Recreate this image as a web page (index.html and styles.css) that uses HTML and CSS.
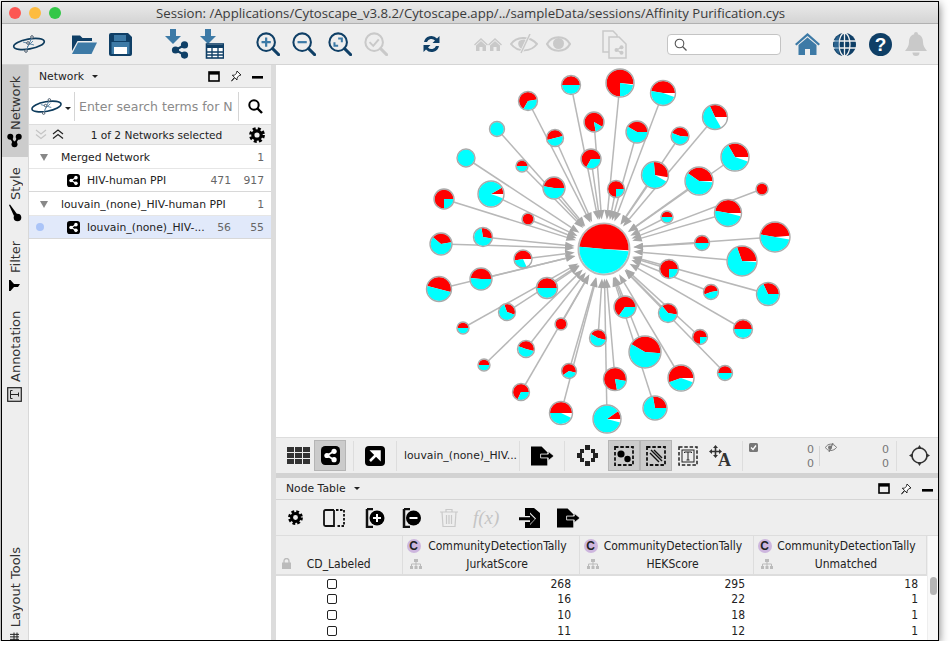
FILE: index.html
```html
<!DOCTYPE html>
<html lang="en">
<head>
  <meta charset="UTF-8">
  <title>Cytoscape</title>
  <link rel="stylesheet" href="styles.css">
</head>
<body>

  <!-- shared icons -->
  <svg class="defs" width="0" height="0">
    <symbol id="i-share" viewBox="0 0 16 16">
      <path d="M12 3.5 4 8l8 4.5" fill="none" stroke="currentColor" stroke-width="2"/>
      <circle cx="4" cy="8" r="3.2" fill="currentColor"/>
      <circle cx="12" cy="3.5" r="3.2" fill="currentColor"/>
      <circle cx="12" cy="12.5" r="3.2" fill="currentColor"/>
    </symbol>
    <symbol id="i-netbox" viewBox="0 0 16 16">
      <rect width="16" height="16" rx="3.5" fill="#000"/>
      <path d="M11 4.5 5 8l6 3.5" fill="none" stroke="#fff" stroke-width="1.5"/>
      <circle cx="5" cy="8" r="2.2" fill="#fff"/>
      <circle cx="11" cy="4.5" r="2.2" fill="#fff"/>
      <circle cx="11" cy="11.5" r="2.2" fill="#fff"/>
    </symbol>
    <symbol id="i-gear" viewBox="0 0 16 16">
      <circle cx="8" cy="8" r="4.2" fill="none" stroke="#000" stroke-width="3.2"/>
      <circle cx="8" cy="8" r="6.4" fill="none" stroke="#000" stroke-width="3" stroke-dasharray="2.9 2.13"/>
    </symbol>
    <symbol id="i-max" viewBox="0 0 12 11">
      <rect x="1" y="1" width="10" height="9" fill="none" stroke="#000" stroke-width="1.6"/>
      <rect x="1" y="1" width="10" height="2.6"/>
    </symbol>
    <symbol id="i-pin" viewBox="0 0 12 12">
      <path d="M7 1l4 4-2 .5-2 2.5V10L4.8 7.8 1.5 11l3-3.6L2.3 5.2H4.500L6.500 3.200z" fill="#fff" stroke="#000" stroke-width=".8" stroke-linejoin="round"/>
    </symbol>
    <symbol id="i-min" viewBox="0 0 12 12">
      <rect x="0" y="6" width="11" height="2.6"/>
    </symbol>
    <symbol id="i-export" viewBox="0 0 24 20">
      <path d="M0 0h11l6 6v14H0z"/>
      <path d="M10 8h8V5l6 5-6 5v-3h-8z" fill="#000" stroke="#eee" stroke-width=".9"/>
    </symbol>
    <symbol id="i-tree" viewBox="0 0 12 12">
      <rect x="4" y="1" width="4" height="3"/>
      <rect x="0" y="8" width="3" height="3"/>
      <rect x="4.500" y="8" width="3" height="3"/>
      <rect x="9" y="8" width="3" height="3"/>
      <path d="M6 4v4M1.500 8V6h9v2" fill="none" stroke="currentColor"/>
    </symbol>
    <symbol id="i-logo" viewBox="0 0 34 20">
      <ellipse cx="17" cy="10" rx="15.500" ry="5" transform="rotate(-10 17 10)" fill="none" stroke="#0d3b5c" stroke-width="1.700"/>
      <path d="M14 17 20 3M11 8l11 3M15 13l6-6" stroke="#5b87a8" stroke-width="1" fill="none"/>
      <circle cx="20" cy="3" r="1.300" fill="#fff" stroke="#456"/>
      <circle cx="14" cy="17" r="1.300" fill="#fff" stroke="#456"/>
      <circle cx="16" cy="9" r="1.300" fill="#fff" stroke="#456"/>
    </symbol>
    <symbol id="i-zoom" viewBox="0 0 26 26">
      <circle cx="11" cy="11" r="9.500" fill="none" stroke="currentColor" stroke-width="2.200"/>
      <path d="M18 18l6.500 6.500" stroke="currentColor" stroke-width="3.200" stroke-linecap="round"/>
    </symbol>
    <symbol id="i-house" viewBox="0 0 14 13">
      <path d="M7 0 14 6.500 13 7.500 7 2 1 7.500 0 6.500z"/>
      <path d="M7 3 12 7.500V13H8.500V9h-3v4H2V7.500z"/>
    </symbol>
  </svg>

  <div class="window">

    <header class="titlebar">
      <span class="light light-red"></span>
      <span class="light light-yellow"></span>
      <span class="light light-green"></span>
      <div class="title">Session: /Applications/Cytoscape_v3.8.2/Cytoscape.app/../sampleData/sessions/Affinity Purification.cys</div>
    </header>

    <div class="toolbar">
      <svg class="logo" width="34" height="20"><use href="#i-logo"/></svg>

      <div class="tool-group group-file">
        <svg width="26" height="22" viewBox="0 0 26 22">
          <path d="M1 2.500h8l2.500 2.500H21v3H6.500L1 18z" fill="#0f3f66"/>
          <path d="M7 9.500h19L20.500 21H1z" fill="#3d7aa6"/>
        </svg>
        <svg width="23" height="23" viewBox="0 0 23 23">
          <path d="M2 0h17l4 4v17a2 2 0 0 1-2 2H2a2 2 0 0 1-2-2V2a2 2 0 0 1 2-2z" fill="#0f3f66"/>
          <path d="M2.500 9h18v12h-18z" fill="#3d7aa6"/>
          <rect x="5" y="2" width="12" height="6" fill="#3d7aa6"/>
          <rect x="5" y="14" width="13" height="7" fill="#fff"/>
        </svg>
      </div>

      <div class="tool-group group-import">
        <svg width="24" height="30" viewBox="0 0 24 30">
          <path d="M5 0h6v7h5l-8 8-8-8h5z" fill="#3d7aa6"/>
          <g color="#0f3f66"><use href="#i-share" x="6" y="12" width="18" height="18"/></g>
        </svg>
        <svg width="24" height="30" viewBox="0 0 24 30">
          <path d="M5 0h6v7h5l-8 8-8-8h5z" fill="#3d7aa6"/>
          <rect x="6.500" y="15" width="17" height="14" fill="#fff" stroke="#0f3f66" stroke-width="1.600"/>
          <path d="M6.500 16h17v3h-17z" fill="#0f3f66"/>
          <path d="M12 19v10M18 19v10M7 23h16M7 26h16" stroke="#0f3f66" stroke-width="1.300"/>
        </svg>
      </div>

      <div class="tool-group group-zoom">
        <svg class="blue-icon" width="24" height="24" viewBox="0 0 26 26">
          <use href="#i-zoom"/>
          <path d="M11 6v10M6 11h10" stroke="#3d7aa6" stroke-width="2.400"/>
        </svg>
        <svg class="blue-icon" width="24" height="24" viewBox="0 0 26 26">
          <use href="#i-zoom"/>
          <path d="M6 11h10" stroke="#3d7aa6" stroke-width="2.400"/>
        </svg>
        <svg class="blue-icon" width="24" height="24" viewBox="0 0 26 26">
          <use href="#i-zoom"/>
          <path d="M11 7h4v4M11 15H7v-4" fill="none" stroke="#3d7aa6" stroke-width="2.200"/>
        </svg>
        <svg class="off-icon" width="24" height="24" viewBox="0 0 26 26">
          <use href="#i-zoom"/>
          <path d="M6 11l4 4 6-7" fill="none" stroke="currentColor" stroke-width="2.200"/>
        </svg>
      </div>

      <svg class="refresh" width="19" height="20" viewBox="0 0 19 20">
        <path d="M2 8a7.500 7.500 0 0 1 13-3.500L17.500 2v7h-7l2.500-2.500A4.800 4.800 0 0 0 5 8z" fill="#0f3f66"/>
        <path d="M17 12a7.500 7.500 0 0 1-13 3.500L1.500 18v-7h7L6 13.500A4.800 4.800 0 0 0 14 12z" fill="#0f3f66"/>
      </svg>

      <div class="tool-group group-hide">
        <svg width="28" height="13" viewBox="0 0 28 13" fill="#c9c9c9">
          <use href="#i-house" x="0" width="14" height="13"/>
          <use href="#i-house" x="14" width="14" height="13"/>
        </svg>
        <svg width="28" height="20" viewBox="0 0 28 20">
          <path d="M1 10c5-7 18-9 26 0-6 8-19 9-26 0z" fill="none" stroke="#c9c9c9" stroke-width="2"/>
          <path d="M9 7c3-2 6-2 8 0l-5 8c-3-1-5-5-3-8z" fill="#c9c9c9"/>
          <path d="M20 0 11 19" stroke="#eee" stroke-width="3"/>
          <path d="M20 0 11 19" stroke="#c9c9c9" stroke-width="1.500"/>
        </svg>
        <svg width="25" height="18" viewBox="0 0 25 18">
          <path d="M1 9c5-9 18-9 23 0-5 9-18 9-23 0z" fill="none" stroke="#c9c9c9" stroke-width="2.200"/>
          <circle cx="12.500" cy="8.500" r="5.500" fill="#c9c9c9"/>
        </svg>
      </div>

      <svg class="doc-icon" width="25" height="29" viewBox="0 0 25 29" fill="#eee" stroke="#c9c9c9" stroke-width="1.500">
        <path d="M1 1h10l4 4v17H1z"/>
        <path d="M7 7h10l7 7v14H7z"/>
        <g color="#c9c9c9"><use href="#i-share" x="12" y="15" width="10" height="10" stroke="none"/></g>
      </svg>

      <div class="search-box">
        <svg width="13" height="13" viewBox="0 0 13 13">
          <circle cx="5.500" cy="5.500" r="4.300" fill="none" stroke="#555" stroke-width="1.100"/>
          <path d="M8.500 8.500l4 4" stroke="#555" stroke-width="1.200"/>
        </svg>
      </div>

      <div class="tool-group group-help">
        <svg width="25" height="22" viewBox="0 0 25 22">
          <path d="M12.500 0 25 11l-1.500 1.500L12.500 3 1.500 12.500 0 11z" fill="#3d7aa6"/>
          <path d="M12.500 4.500 21.500 12v10h-6.500v-6h-5v6H3.500V12z" fill="#3d7aa6"/>
        </svg>
        <svg width="23" height="23" viewBox="0 0 23 23">
          <circle cx="11.500" cy="11.500" r="11.500" fill="#0f3f66"/>
          <path d="M0 8h23M0 15h23M11.500 0v23" stroke="#eee" stroke-width="1.300"/>
          <ellipse cx="11.500" cy="11.500" rx="5.500" ry="11.500" fill="none" stroke="#eee" stroke-width="1.300"/>
          <path d="M6 2a11.500 11.500 0 0 0 0 19z" fill="#3d7aa6" opacity=".6"/>
        </svg>
        <div class="help-badge">?</div>
        <svg width="22" height="24" viewBox="0 0 22 24" fill="#c9c9c9">
          <circle cx="11" cy="2" r="2"/>
          <path d="M11 2c5 0 7 4 7 8 0 4 2 6 4 9H0c2-3 4-5 4-9 0-4 2-8 7-8z"/>
          <path d="M7.500 20.500h7a3.500 3.500 0 0 1-7 0z"/>
        </svg>
      </div>
    </div>

    <div class="main">

      <nav class="tabs">
        <div class="tab tab-network">
          <svg width="15" height="15" class="tab-icon turn"><use href="#i-share" color="#000"/></svg>
          <span>Network</span>
        </div>
        <div class="tab tab-style">
          <svg width="14" height="18" viewBox="0 0 14 18" class="tab-icon flip">
            <path d="M1 1 2 .5 9 10l-3 2z"/>
            <circle cx="9.500" cy="13.500" r="3.800"/>
          </svg>
          <span>Style</span>
        </div>
        <div class="tab tab-filter">
          <svg width="11" height="11" viewBox="0 0 11 11" class="tab-icon">
            <path d="M0 0h11v1.500L7 5v6L4 9V5L0 1.500z" transform="rotate(90 5.500 5.500)"/>
          </svg>
          <span>Filter</span>
        </div>
        <div class="tab tab-annotation">
          <svg width="15" height="15" viewBox="0 0 15 15" class="tab-icon turn">
            <rect x=".7" y=".7" width="13.600" height="13.600" fill="#ddd" stroke="#222" stroke-width="1.200"/>
            <path d="M3.500 5.500V3.500h8v2M7.500 3.500v8M5.500 11.500h4" fill="none" stroke="#222"/>
          </svg>
          <span>Annotation</span>
        </div>
        <div class="tab tab-layout">
          <svg width="9" height="8" viewBox="0 0 9 8" class="tab-icon">
            <path d="M0 1h9M0 3.500h9M0 6h9M2 0v8M5 0v8" stroke="#222"/>
          </svg>
          <span>Layout Tools</span>
        </div>
      </nav>

      <section class="net-panel">
        <div class="panel-head net-head">
          <span class="panel-name">Network</span><span class="caret"></span>
          <div class="win-btns">
            <svg width="12" height="11"><use href="#i-max"/></svg>
            <svg width="12" height="12"><use href="#i-pin"/></svg>
            <svg width="12" height="12"><use href="#i-min"/></svg>
          </div>
        </div>

        <div class="net-search">
          <svg class="search-logo" width="33" height="19"><use href="#i-logo"/></svg>
          <span class="caret"></span>
          <div class="net-search-text">Enter search terms for N</div>
          <svg class="search-go" width="15" height="15" viewBox="0 0 15 15">
            <circle cx="6" cy="6" r="4.700" fill="none" stroke="#000" stroke-width="2"/>
            <path d="M9.500 9.500l4.500 4.500" stroke="#000" stroke-width="2.400"/>
          </svg>
        </div>

        <div class="net-nav">
          <svg width="12" height="11" viewBox="0 0 12 11" fill="none" stroke="#c4c4c4" stroke-width="1.200">
            <path d="M1 1l5 4 5-4M1 5.500l5 4 5-4"/>
          </svg>
          <svg width="12" height="11" viewBox="0 0 12 11" fill="none" stroke="#222" stroke-width="1.200">
            <path d="M1 5l5-4 5 4M1 9.500l5-4 5 4"/>
          </svg>
          <div class="net-count">1 of 2 Networks selected</div>
          <svg width="16" height="16"><use href="#i-gear"/></svg>
        </div>

        <div class="net-row">
          <span class="tri"></span><span class="net-name">Merged Network</span><span class="num">1</span>
        </div>
        <div class="net-row net-child">
          <svg width="13" height="13"><use href="#i-netbox"/></svg>
          <span class="net-name">HIV-human PPI</span><span class="num">471</span><span class="num num-wide">917</span>
        </div>
        <div class="net-row">
          <span class="tri"></span><span class="net-name">louvain_(none)_HIV-human PPI</span><span class="num">1</span>
        </div>
        <div class="net-row net-child net-selected">
          <span class="dot"></span>
          <svg width="13" height="13"><use href="#i-netbox"/></svg>
          <span class="net-name">louvain_(none)_HIV-...</span><span class="num">56</span><span class="num num-wide">55</span>
        </div>
      </section>

      <div class="divider"></div>

      <section class="right">
        <svg id="graph" class="graph" viewBox="276 65 662 372"></svg>

        <div class="graph-bar">
          <svg class="gb-grid" width="23" height="17" viewBox="0 0 23 17" fill="#333">
            <rect width="7" height="5"/><rect x="8" width="7" height="5"/><rect x="16" width="7" height="5"/>
            <rect y="6" width="7" height="5"/><rect x="8" y="6" width="7" height="5"/><rect x="16" y="6" width="7" height="5"/>
            <rect y="12" width="7" height="5"/><rect x="8" y="12" width="7" height="5"/><rect x="16" y="12" width="7" height="5"/>
          </svg>
          <div class="gb-on gb-share"><svg width="19" height="19"><use href="#i-netbox"/></svg></div>
          <i class="gb-sep"></i>
          <svg class="gb-arrow" width="20" height="20" viewBox="0 0 20 20">
            <rect width="20" height="20" rx="4"/>
            <path d="M5 15 12 8M7.500 5.500h7v7z" stroke="#fff" stroke-width="2.500" fill="#fff"/>
          </svg>
          <i class="gb-sep"></i>
          <span class="gb-name">louvain_(none)_HIV...</span>
          <i class="gb-sep"></i>
          <svg class="gb-export" width="23" height="20"><use href="#i-export"/></svg>
          <i class="gb-sep"></i>
          <svg class="gb-diamond" width="21" height="21" viewBox="0 0 21 21" fill="#222">
            <rect x="8" y="0" width="5" height="5"/><rect x="3" y="4" width="4" height="4"/><rect x="14" y="4" width="4" height="4"/>
            <rect x="0" y="8" width="5" height="5"/><rect x="16" y="8" width="5" height="5"/>
            <rect x="3" y="13" width="4" height="4"/><rect x="14" y="13" width="4" height="4"/><rect x="8" y="16" width="5" height="5"/>
          </svg>
          <div class="gb-on gb-sel1">
            <svg width="20" height="20" viewBox="0 0 20 20">
              <rect x="1" y="1" width="18" height="18" fill="none" stroke="#111" stroke-width="1.800" stroke-dasharray="3.500 1.800"/>
              <circle cx="7" cy="8" r="3.600"/><circle cx="13.500" cy="13" r="3.200"/>
            </svg>
          </div>
          <div class="gb-on gb-sel2">
            <svg width="20" height="20" viewBox="0 0 20 20">
              <rect x="1" y="1" width="18" height="18" fill="none" stroke="#111" stroke-width="1.800" stroke-dasharray="3.500 1.800"/>
              <path d="M4 7l9 9M5 4l11 11M8 4l8 8" stroke="#111" stroke-width="1.400"/>
            </svg>
          </div>
          <svg class="gb-text" width="20" height="20" viewBox="0 0 20 20">
            <rect x="1" y="1" width="18" height="18" fill="none" stroke="#222" stroke-width="1.500" stroke-dasharray="3.500 1.800"/>
            <rect x="4" y="4" width="12" height="12" fill="none" stroke="#222"/>
            <path d="M6.500 7V6h7v1M10 6v8M8.500 14h3" fill="none" stroke="#222"/>
          </svg>
          <div class="gb-move">
            <svg class="gb-move-arrows" width="13" height="13" viewBox="0 0 13 13" fill="#333">
              <path d="M6.500 0 9 3H7.300v2.700H10V4l3 2.500L10 9V7.300H7.300V10H9l-2.500 3L4 10h1.700V7.300H3V9L0 6.500 3 4v1.700h2.700V3H4z"/>
            </svg>
            <span class="gb-a">A</span>
          </div>
          <i class="gb-sep gb-sep-stat"></i>
          <div class="stat stat-sel">
            <svg width="9" height="9" viewBox="0 0 9 9">
              <rect width="9" height="9" rx="1.500" fill="#777"/>
              <path d="M2 4.500l2 2 3-4" fill="none" stroke="#fff" stroke-width="1.300"/>
            </svg>
            <div class="stat-nums"><span>0</span><span>0</span></div>
          </div>
          <i class="stat-sep"></i>
          <div class="stat stat-hid">
            <svg width="12" height="9" viewBox="0 0 12 9" fill="none" stroke="#777">
              <path d="M.5 4.500c2-4 8-5 11 0-3 4-9 4-11 0z"/>
              <path d="M8 0 4 9" stroke-width="1.200"/>
              <circle cx="5" cy="4.500" r="2" fill="#777" stroke="none"/>
            </svg>
            <div class="stat-nums"><span>0</span><span>0</span></div>
          </div>
          <i class="gb-sep"></i>
          <svg class="gb-cross" width="21" height="21" viewBox="0 0 21 21" fill="none" stroke="#333">
            <circle cx="10.500" cy="10.500" r="7.500" stroke-width="1.600"/>
            <path d="M10.500 0l2.500 4H8zM10.500 21 8 17h5zM0 10.500 4 8v5zM21 10.500 17 13V8z" fill="#333" stroke="none"/>
          </svg>
        </div>

        <div class="h-sep"></div>

        <div class="panel-head table-head">
          <span class="panel-name">Node Table</span><span class="caret"></span>
          <div class="win-btns">
            <svg width="12" height="11"><use href="#i-max"/></svg>
            <svg width="12" height="12"><use href="#i-pin"/></svg>
            <svg width="12" height="12"><use href="#i-min"/></svg>
          </div>
        </div>

        <div class="table-tools">
          <svg class="tt-gear" width="15" height="15"><use href="#i-gear"/></svg>
          <svg class="tt-split" width="22" height="18" viewBox="0 0 22 18" fill="none" stroke="#111" stroke-width="1.800">
            <path d="M11 1H2.500A1.500 1.500 0 0 0 1 2.500v13A1.500 1.500 0 0 0 2.500 17H11V1"/>
            <path d="M13 1h8v16h-8" stroke-dasharray="2.500 1.500"/>
          </svg>
          <svg class="tt-plus" width="20" height="20" viewBox="0 0 20 20">
            <path d="M2 1h6M2 1v18h6" fill="none" stroke="#111" stroke-width="2.500"/>
            <circle cx="12" cy="10" r="7.500"/>
            <path d="M12 6v8M8 10h8" stroke="#fff" stroke-width="2"/>
          </svg>
          <svg class="tt-minus" width="19" height="20" viewBox="0 0 19 20">
            <path d="M2 1h6M2 1v18h6" fill="none" stroke="#111" stroke-width="2.500"/>
            <circle cx="11.500" cy="10" r="7.500"/>
            <path d="M7.500 10h8" stroke="#fff" stroke-width="2"/>
          </svg>
          <svg class="tt-trash" width="18" height="19" viewBox="0 0 18 19" fill="none" stroke="#c9c9c9" stroke-width="1.200">
            <path d="M0 4h18M6 4V1.500h6V4M2 4l1 14.500h12L16 4M6.500 7v9M9 7v9M11.500 7v9"/>
          </svg>
          <span class="tt-fx">f(x)</span>
          <svg class="tt-import" width="21" height="20" viewBox="0 0 21 20">
            <path d="M6 0h9l6 5v15H6v-6h5v3l6-6.500L11 4.500V8H6z"/>
            <path d="M0 9.300h11V6l5 5-5 5v-3.700H0z"/>
          </svg>
          <svg class="tt-export" width="23" height="20"><use href="#i-export"/></svg>
        </div>

        <div class="table-wrap">
          <table class="node-table">
            <thead>
              <tr>
                <th class="col-first">
                  <div class="th-line">&nbsp;</div>
                  <div class="th-line">
                    <svg class="lock" width="9" height="11" viewBox="0 0 9 11">
                      <rect y="4.500" width="9" height="6.500" fill="#bbb"/>
                      <path d="M2 5V3a2.500 2.500 0 0 1 5 0v2" fill="none" stroke="#bbb" stroke-width="1.300"/>
                    </svg>
                    <span class="th-label">CD_Labeled</span>
                  </div>
                </th>
                <th class="col-j">
                  <div class="th-line"><span class="ns">C</span><span class="th-ns">CommunityDetectionTally</span></div>
                  <div class="th-line"><svg class="tree" width="12" height="12"><use href="#i-tree"/></svg><span class="th-label">JurkatScore</span></div>
                </th>
                <th class="col-h">
                  <div class="th-line"><span class="ns">C</span><span class="th-ns">CommunityDetectionTally</span></div>
                  <div class="th-line"><svg class="tree" width="12" height="12"><use href="#i-tree"/></svg><span class="th-label">HEKScore</span></div>
                </th>
                <th class="col-u">
                  <div class="th-line"><span class="ns">C</span><span class="th-ns">CommunityDetectionTally</span></div>
                  <div class="th-line"><svg class="tree" width="12" height="12"><use href="#i-tree"/></svg><span class="th-label">Unmatched</span></div>
                </th>
              </tr>
            </thead>
            <tbody>
              <tr><td class="cb-cell"><span class="cb"></span></td><td>268</td><td>295</td><td>18</td></tr>
              <tr><td class="cb-cell"><span class="cb"></span></td><td>16</td><td>22</td><td>1</td></tr>
              <tr><td class="cb-cell"><span class="cb"></span></td><td>10</td><td>18</td><td>1</td></tr>
              <tr><td class="cb-cell"><span class="cb"></span></td><td>11</td><td>12</td><td>1</td></tr>
            </tbody>
          </table>
          <div class="scroll-track"><div class="scroll-thumb"></div></div>
        </div>
      </section>
    </div>
  </div>

  <script src="net.js"></script>
</body>
</html>
```

FILE: styles.css
```css
* {
  box-sizing: border-box;
}

body {
  margin: 0;
  background: #fff;
  font-family: "DejaVu Sans", sans-serif;
  font-size: 10.8px;
  color: #222;
}

.defs {
  position: absolute;
}

svg {
  display: block;
  flex: none;
}

.window {
  margin: 1px 0 0 1px;
  width: 938px;
  height: 640px;
  border: 1px solid #000;
  display: flex;
  flex-direction: column;
  overflow: hidden;
  background: #eee;
  box-shadow: 0 3px 9px rgba(0, 0, 0, 0.55);
}

/* title bar */
.titlebar {
  height: 22px;
  flex: none;
  display: flex;
  align-items: center;
  padding-left: 7px;
  gap: 8px;
  background: linear-gradient(#ebebeb, #d4d4d4);
  border-bottom: 1px solid #b1b1b1;
}

.light {
  width: 12px;
  height: 12px;
  border-radius: 50%;
}

.light-red { background: #fc5753; }
.light-yellow { background: #fdbc40; }
.light-green { background: #33c748; }

.title {
  margin-left: 87px;
  font-family: "Open Sans", sans-serif;
  font-size: 13.2px;
  color: #3a3a3a;
  white-space: nowrap;
}

/* main toolbar */
.toolbar {
  height: 41px;
  flex: none;
  display: flex;
  align-items: center;
  padding-left: 10px;
  border-bottom: 1px solid #d5d5d5;
  background: #eee;
}

.tool-group {
  display: flex;
  align-items: center;
}

.blue-icon { color: #0f3f66; }
.off-icon { color: #c9c9c9; }

.group-file { margin-left: 25px; gap: 12px; }
.group-import { margin-left: 33px; gap: 11px; }
.group-zoom { margin-left: 32px; gap: 12px; }
.refresh { margin-left: 34px; }
.group-hide { margin-left: 33px; gap: 8px; }
.doc-icon { margin-left: 31px; }

.search-box {
  margin-left: 40px;
  width: 114px;
  height: 21px;
  background: #fff;
  border: 1px solid #c4c4c4;
  border-radius: 4px;
  display: flex;
  align-items: center;
  padding-left: 6px;
}

.group-help { margin-left: 14px; gap: 13px; }

.help-badge {
  width: 23px;
  height: 23px;
  border-radius: 50%;
  background: #0f3f66;
  color: #fff;
  font-family: "Liberation Sans", sans-serif;
  font-weight: bold;
  font-size: 19px;
  line-height: 23px;
  text-align: center;
}

.main {
  flex: 1;
  min-height: 0;
  display: flex;
}

/* left side tabs */
.tabs {
  width: 27px;
  flex: none;
  display: flex;
  flex-direction: column;
  background: #eee;
  border-right: 1px solid #d8d8d8;
}

.tab {
  writing-mode: vertical-rl;
  transform: rotate(180deg);
  display: flex;
  align-items: center;
  justify-content: flex-start;
  gap: 3px;
  font-size: 13px;
  color: #333;
  flex: none;
}

.tab-network {
  height: 92px;
  background: #ccc;
  padding-inline-start: 9px;
}

.tab-style { height: 70px; padding-inline-start: 5px; gap: 4px; }
.tab-filter { height: 67px; padding-inline-start: 3px; gap: 7px; }
.tab-annotation { height: 113px; padding-inline-start: 5px; gap: 5px; }
.tab-layout { margin-top: auto; gap: 5px; }

/* the tab itself is turned half way round, these icons are not */
.turn { transform: rotate(90deg); }
.flip { transform: rotate(180deg); }

/* network panel */
.net-panel {
  width: 242px;
  flex: none;
  background: #fff;
}

.panel-head {
  height: 22px;
  flex: none;
  display: flex;
  align-items: center;
  padding-left: 10px;
  background: #eee;
  border-bottom: 1px solid #d5d5d5;
}

.net-head {
  height: 23px;
}

.panel-name {
  color: #222;
}

.caret {
  width: 0;
  height: 0;
  margin-left: 8px;
  border-left: 3px solid transparent;
  border-right: 3px solid transparent;
  border-top: 3px solid #222;
}

.win-btns {
  margin-left: auto;
  display: flex;
  align-items: center;
  gap: 10px;
  padding-right: 7px;
}

.table-head .win-btns {
  padding-right: 4px;
}

.net-search {
  height: 37px;
  display: flex;
  align-items: center;
  background: #fff;
  padding-left: 1px;
  border-bottom: 1px solid #ddd;
}

.net-search .caret {
  margin: 4px 0 0 2px;
}

.net-search-text {
  margin-left: 3px;
  width: 165px;
  height: 29px;
  padding-left: 4px;
  border-left: 1px solid #d5d5d5;
  border-right: 1px solid #d5d5d5;
  font-size: 12.5px;
  line-height: 29px;
  color: #8a8a8a;
  white-space: nowrap;
  overflow: hidden;
}

.search-go {
  margin-left: 9px;
}

.net-nav {
  height: 20px;
  display: flex;
  align-items: center;
  padding: 0 6px;
  gap: 5px;
  background: #eee;
  border-bottom: 1px solid #ddd;
}

.net-count {
  flex: 1;
  text-align: center;
  font-size: 10.6px;
}

.net-row {
  height: 24px;
  display: flex;
  align-items: center;
  padding: 1px 7px 0 11px;
  border-bottom: 1px solid #e6e6e6;
}

.tri {
  width: 0;
  height: 0;
  border-left: 4px solid transparent;
  border-right: 4px solid transparent;
  border-top: 7px solid #888;
  margin-right: 13px;
}

.net-child {
  padding-left: 38px;
  height: 23px;
  border-bottom-color: #d8d8d8;
}

.net-child svg {
  margin-right: 7px;
}

.net-name {
  flex: 1;
  white-space: nowrap;
  overflow: hidden;
}

.num {
  color: #666;
}

.num-wide {
  width: 33px;
  text-align: right;
}

.net-selected {
  position: relative;
  background: #e1e9fa;
}

.dot {
  position: absolute;
  left: 7px;
  top: 7px;
  width: 8px;
  height: 8px;
  border-radius: 50%;
  background: #aac4f8;
}

.divider {
  width: 5px;
  flex: none;
  background: #dcdcdc;
}

/* graph and lower panels */
.right {
  flex: 1;
  min-width: 0;
  display: flex;
  flex-direction: column;
}

.graph {
  width: 100%;
  height: 372px;
  background: #fff;
}

.graph-bar {
  height: 36px;
  flex: none;
  display: flex;
  align-items: center;
  padding-left: 11px;
  border-top: 1px solid #ddd;
  background: #eee;
}

.gb-on {
  width: 32px;
  height: 31px;
  display: flex;
  align-items: center;
  justify-content: center;
  background: #cbcbcb;
  border: 1px solid #b5b5b5;
}

.gb-share { margin-left: 4px; }

.gb-sep {
  width: 1px;
  height: 30px;
  background: #ddd;
  flex: none;
}

.gb-share + .gb-sep { margin-left: 7px; }
.gb-arrow { margin: 0 11px; }

.gb-name {
  margin: 0 2px 0 7px;
  white-space: nowrap;
  width: 113px;
}

.gb-export { margin: 0 10px 0 11px; }
.gb-diamond { margin: 0 10px 0 12px; }

.gb-text { margin-left: 6px; }

.gb-move {
  position: relative;
  width: 22px;
  height: 22px;
  margin: 0 11px 0 11px;
}

.gb-move-arrows {
  position: absolute;
  left: 0;
  top: 0;
}

.gb-a {
  position: absolute;
  right: 0;
  bottom: -2px;
  font-family: "Liberation Serif", serif;
  font-weight: bold;
  font-size: 18px;
  line-height: 18px;
  color: #333;
}

.stat {
  display: flex;
  align-self: flex-start;
  margin-top: 5px;
  padding-left: 6px;
  justify-content: space-between;
}

.stat-sel { width: 71px; }
.stat-hid { width: 69px; padding-left: 5px; margin-right: 7px; }

.stat-nums {
  display: flex;
  flex-direction: column;
  align-items: flex-end;
  font-size: 11px;
  line-height: 14px;
  color: #777;
}

.stat-sep {
  width: 1px;
  height: 20px;
  margin: 0 0 0 5px;
  background: #d5d5d5;
  flex: none;
}

.gb-cross { margin-left: 12px; }

.h-sep {
  height: 5px;
  flex: none;
  background: #d2d2d2;
}

.table-tools {
  height: 36px;
  flex: none;
  display: flex;
  align-items: center;
  padding-left: 12px;
  border-bottom: 1px solid #ddd;
}

.tt-split { margin-left: 20px; }
.tt-plus { margin-left: 20px; }
.tt-minus { margin-left: 17px; }
.tt-trash { margin-left: 19px; }

.tt-fx {
  margin-left: 15px;
  width: 29px;
  font-family: "Liberation Serif", serif;
  font-style: italic;
  font-size: 19px;
  color: #c4c4c4;
}

.tt-import { margin-left: 17px; }
.tt-export { margin-left: 17px; }

.table-wrap {
  flex: 1;
  min-height: 0;
  display: flex;
  background: #fff;
  overflow: hidden;
}

.node-table {
  width: 650px;
  height: 0;
  flex: none;
  table-layout: fixed;
  border-collapse: collapse;
  font-family: "DejaVu Sans Condensed", "DejaVu Sans", sans-serif;
  font-size: 11px;
}

.node-table th {
  height: 39px;
  padding: 0;
  font-weight: normal;
  background: #eee;
  border-right: 1px solid #ddd;
  border-bottom: 2px solid #ddd;
}

.col-first { width: 126px; }
.col-j { width: 177px; }
.col-h { width: 174px; }
.col-u { width: 173px; }

.th-line {
  height: 18px;
  display: flex;
  align-items: center;
  position: relative;
  justify-content: center;
}

.th-ns {
  margin-left: 14px;
  white-space: nowrap;
  font-size: 12px;
}

.ns {
  position: absolute;
  left: 4px;
  top: 2px;
  width: 14px;
  height: 14px;
  border-radius: 50%;
  background: #cdb6de;
  color: #222;
  font-family: "Liberation Sans", sans-serif;
  font-weight: bold;
  font-size: 12px;
  line-height: 14px;
  text-align: center;
}

.tree {
  position: absolute;
  left: 7px;
  top: 3px;
  color: #bbb;
  fill: #bbb;
}

.lock {
  position: absolute;
  left: 6px;
  top: 3px;
}

.th-label {
  font-size: 12px;
  margin-left: 13px;
}

.col-first .th-label { margin-left: 0; }

.node-table td {
  height: 16px;
  padding: 0 8px 0 0;
  font-size: 12px;
  line-height: 14px;
  text-align: right;
}

.node-table .cb-cell {
  text-align: center;
  padding: 0 15px 0 0;
}

.cb {
  display: inline-block;
  width: 10px;
  height: 10px;
  border: 1px solid #222;
  border-radius: 2px;
  vertical-align: -1px;
  background: #fff;
}

.scroll-track {
  flex: 1;
  border-left: 1px solid #eee;
  background: #f9f9f9;
  padding: 39px 0 0 2px;
}

.scroll-thumb {
  width: 7px;
  height: 18px;
  margin-top: 2px;
  border-radius: 4px;
  background: #b5b5b5;
}
```

FILE: net.js
```js
// Draw the network: every node is a pie chart with an edge to the hub
const SVG_NS = "http://www.w3.org/2000/svg";
const HUB = { x: 604, y: 249, r: 24.5 };

// x, y, r, then pie angles in degrees counter-clockwise from east:
// red runs a -> b, cyan runs b -> c, what is left stays white
const nodes = [
  [571, 85, 9.5, 0, 180, 360], [528, 101, 9.5, 10, 240, 370], [497, 129, 7.5, 0, 0, 360],
  [466, 158, 9, 0, 0, 360], [555, 138, 8.5, 15, 195, 375], [594, 122, 10, -30, 280, 330],
  [591, 159, 10, 0, 240, 360], [522, 166, 6, 0, 180, 360], [554, 188, 11, 0, 170, 360],
  [491, 194, 13, 0, 30, 340], [444, 199, 10, 0, 270, 360], [528, 219, 6, 0, 360, 360],
  [483, 237, 9.5, -10, 100, 350], [441, 244, 11, 10, 140, 370], [616, 189, 8.5, 0, 270, 360],
  [620, 83, 14, -5, 270, 350], [663, 93, 12.5, 0, 170, 340], [715, 117, 12.5, 0, 115, 300],
  [637, 132, 11, 0, 150, 360], [680, 136, 9, -5, 160, 355], [735, 157, 14, 0, 120, 340],
  [655, 175, 13.5, -10, 95, 330], [699, 181, 14, 0, 145, 355], [762, 189, 6, 0, 360, 360],
  [728, 213, 13.5, 0, 170, 345], [667, 217, 6, 0, 180, 360], [775, 237, 15, 5, 170, 350],
  [702, 243, 7.5, 0, 180, 360], [742, 261, 15, 0, 110, 355], [669, 269, 9.5, 0, 270, 360],
  [711, 292, 7.5, 10, 200, 370], [768, 294, 11.5, 0, 115, 360], [668, 313, 9.5, -10, 130, 350],
  [743, 329, 9.5, 0, 180, 360], [700, 337, 7.5, 0, 270, 360], [625, 307, 11, 0, 235, 360],
  [645, 352, 16, -5, 150, 355], [725, 373, 7.5, 0, 180, 360], [681, 378, 13, 0, 200, 340],
  [615, 379, 11.5, -10, 280, 350], [655, 408, 12, 0, 100, 360], [607, 419, 14, 0, 35, 345],
  [523, 259, 9, 0, 190, 295], [481, 279, 11, -3, 175, 360], [439, 289, 12.5, -15, 165, 345],
  [547, 288, 10.5, 0, 180, 360], [507, 312, 8.5, -20, 110, 340], [463, 328, 6, 0, 180, 360],
  [561, 324, 6, 0, 360, 360], [526, 349, 8.5, -15, 160, 345], [598, 338, 8.5, -15, 150, 345],
  [484, 365, 6, 0, 180, 360], [569, 371, 7.5, -15, 215, 345], [521, 392, 8.5, 0, 245, 360],
  [561, 413, 11.5, 0, 180, 335]
];

function add(parent, tag, attrs) {
  let el = document.createElementNS(SVG_NS, tag);
  for (let k in attrs) {
    el.setAttribute(k, attrs[k]);
  }
  parent.appendChild(el);
  return el;
}

function point(x, y, r, deg) {
  let rad = deg * Math.PI / 180;
  return (x + r * Math.cos(rad)).toFixed(2) + " " + (y - r * Math.sin(rad)).toFixed(2);
}

function slice(parent, x, y, r, from, to, color) {
  if (to - from <= 0) return;
  if (to - from >= 360) {
    add(parent, "circle", { cx: x, cy: y, r: r, fill: color });
    return;
  }
  let large = to - from > 180 ? 1 : 0;
  let d = "M" + x + " " + y + "L" + point(x, y, r, from) +
    "A" + r + " " + r + " 0 " + large + " 0 " + point(x, y, r, to) + "Z";
  add(parent, "path", { d: d, fill: color });
}

function drawPie(parent, x, y, r, a, b, c) {
  add(parent, "circle", { cx: x, cy: y, r: r, fill: "#fff" });
  slice(parent, x, y, r - 0.5, a, b, "#ff0000");
  slice(parent, x, y, r - 0.5, b, c, "#00ffff");
  add(parent, "circle", { cx: x, cy: y, r: r, fill: "none", stroke: "#aaa", "stroke-width": 1.4 });
}

function drawEdge(parent, x, y) {
  let dx = x - HUB.x;
  let dy = y - HUB.y;
  let len = Math.sqrt(dx * dx + dy * dy);
  let ux = dx / len;
  let uy = dy / len;
  let tip = 29.5;
  let base = 39;
  let w = 3.5;
  add(parent, "line", {
    x1: x, y1: y,
    x2: HUB.x + ux * base, y2: HUB.y + uy * base,
    stroke: "#b8b8b8", "stroke-width": 1.5
  });
  let bx = HUB.x + ux * base;
  let by = HUB.y + uy * base;
  let pts = (HUB.x + ux * tip) + "," + (HUB.y + uy * tip) + " " +
    (bx - uy * w) + "," + (by + ux * w) + " " +
    (bx + uy * w) + "," + (by - ux * w);
  add(parent, "polygon", { points: pts, fill: "#a8a8a8" });
}

let graph = document.getElementById("graph");

for (let i = 0; i < nodes.length; i++) {
  drawEdge(graph, nodes[i][0], nodes[i][1]);
}
for (let i = 0; i < nodes.length; i++) {
  let n = nodes[i];
  drawPie(graph, n[0], n[1], n[2], n[3], n[4], n[5]);
}

// hub sits on top, with a thicker ring
add(graph, "circle", { cx: HUB.x, cy: HUB.y, r: HUB.r + 1, fill: "#fff", stroke: "#bbb", "stroke-width": 2 });
slice(graph, HUB.x, HUB.y, HUB.r, -3, 175, "#ff0000");
slice(graph, HUB.x, HUB.y, HUB.r, 175, 355, "#00ffff");
```
